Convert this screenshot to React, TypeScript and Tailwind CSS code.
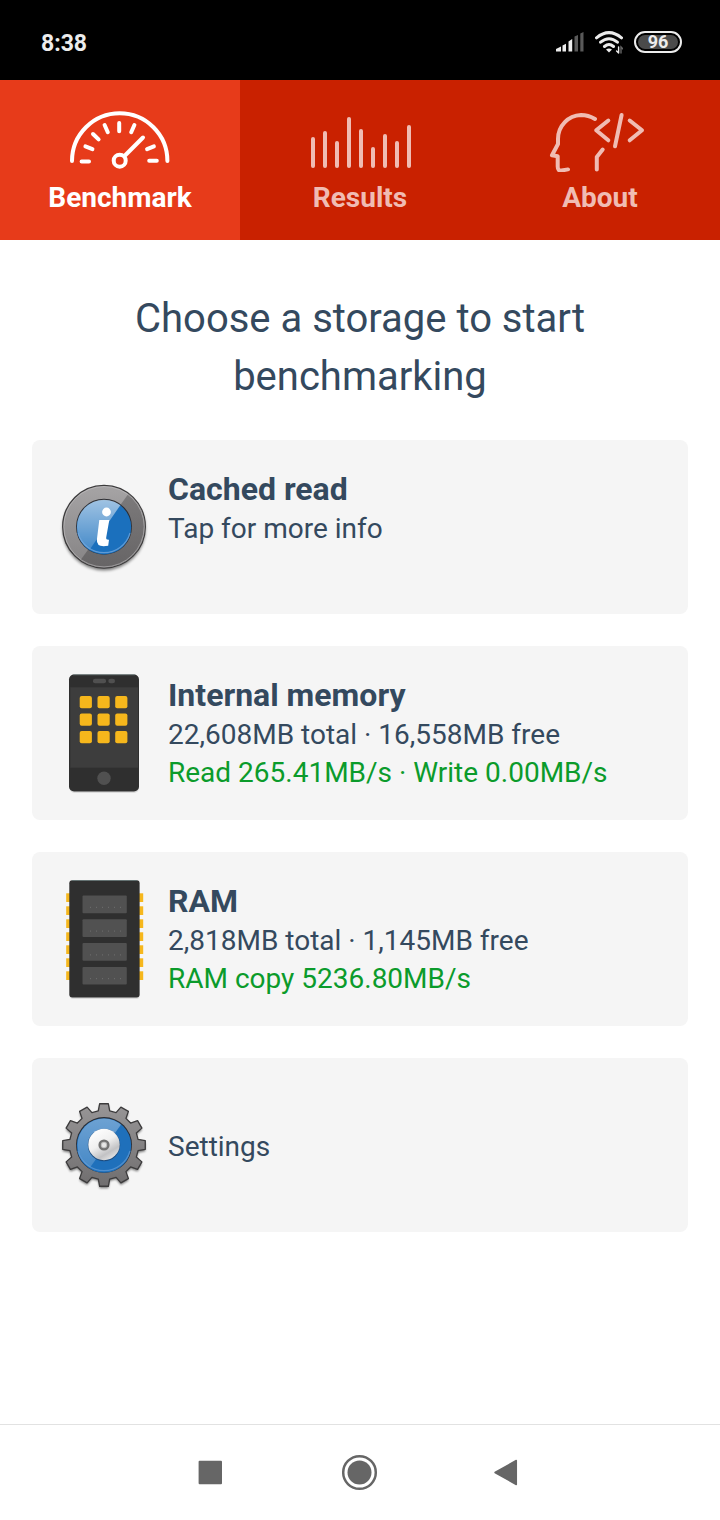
import type { ReactNode } from "react";

const LEVELS = [29, 23, 33, 9, 21, 39, 26, 33, 17];

function GaugeIcon() {
  return (
    <svg className="h-16 w-28" viewBox="0 0 112 64" fill="none" stroke="currentColor" strokeWidth="4" strokeLinecap="round" aria-hidden="true">
      <path d="M8 53a47.7 47.7 0 0 1 95.4 0" />
      <circle cx="55.7" cy="52.7" r="6" />
      <path d="M60.5 48L79 29.5" />
      <path d="M17.600 53.6h7.400M21.400 38.400l7 2.800M29 26l5.600 5.400M40.600 17l3.200 7.200M55.2 15v8.200M70.400 17l-3.200 7.200M89.900 38.400l-6.800 2.800M85.2 52.7h7.600" />
    </svg>
  );
}

function LevelsIcon() {
  return (
    <svg className="h-16 w-28" viewBox="0 0 112 64" fill="none" stroke="currentColor" strokeWidth="4" strokeLinecap="round" aria-hidden="true">
      {LEVELS.map((top, i) => (
        <path key={i} d={`M${9 + i * 12} ${top + 2}V58`} />
      ))}
    </svg>
  );
}

function HeadCodeIcon() {
  return (
    <svg className="h-16 w-28" viewBox="0 0 112 64" fill="none" stroke="currentColor" strokeWidth="4" strokeLinecap="round" strokeLinejoin="round" aria-hidden="true">
      <path d="M51 11C46 8 42 7 37 7C24 7.500 14 18 14 31V36L8 47.300L13.700 48.300V58.500C13.700 61.500 15 63 17.500 62.500L24 61.400" />
      <path d="M58.700 41.500L52.800 49V61.500M64.300 12.500L52.200 22.300L64.300 32.300M77.600 7L71 38.300M85.700 12.500L98 22.300L85.700 32.300" />
    </svg>
  );
}

function InfoIcon() {
  return (
    <svg className="h-full w-full" viewBox="0 0 96 120" aria-hidden="true">
      <defs>
        <linearGradient id="infoRim" x1="0" y1="0" x2="0" y2="1">
          <stop offset="0" stopColor="#a6a4a5" />
          <stop offset="1" stopColor="#858384" />
        </linearGradient>
        <linearGradient id="infoShade" x1="0" y1="0" x2="0" y2="1">
          <stop offset="0" stopColor="#7c7a7b" />
          <stop offset="1" stopColor="#646263" />
        </linearGradient>
        <linearGradient id="infoGloss" x1="0" y1="0" x2="0" y2="1">
          <stop offset="0" stopColor="#fff" stopOpacity="0.6" />
          <stop offset="1" stopColor="#fff" stopOpacity="0.15" />
        </linearGradient>
        <clipPath id="infoDisc"><circle cx="48" cy="59.700" r="41" /></clipPath>
        <clipPath id="infoFace"><circle cx="48" cy="59.700" r="27" /></clipPath>
        <filter id="infoShadow" x="-20%" y="-20%" width="140%" height="140%"><feGaussianBlur stdDeviation="1.500" /></filter>
      </defs>
      <circle cx="48" cy="62" r="41.500" fill="#000" opacity="0.5" filter="url(#infoShadow)" />
      <circle cx="48" cy="59.700" r="41.300" fill="url(#infoRim)" stroke="#3c3b3c" strokeWidth="1.300" />
      <path clipPath="url(#infoDisc)" d="M73 26L21 98L50 110L95 95V30Z" fill="url(#infoShade)" />
      <circle cx="48" cy="59.700" r="40.200" fill="none" stroke="#c8c6c7" strokeWidth="0.800" opacity="0.7" />
      <circle cx="48" cy="59.700" r="28" fill="#2e2f34" />
      <circle cx="48" cy="60.200" r="27.200" fill="#1b70bd" />
      <path clipPath="url(#infoFace)" d="M18 30H70L30 88L15 80Z" fill="url(#infoGloss)" />
      <path d="M22 66a27 27 0 0 0 52 0" fill="none" stroke="#7aace0" strokeWidth="1.200" opacity="0.7" />
      <circle cx="50.500" cy="45" r="4.400" fill="#fff" />
      <path d="M43.300 53H53.300L50.200 70.500Q49.800 73 53 72.700L52.200 78.700Q40.200 81 40.900 72.500Z" fill="#fff" />
    </svg>
  );
}

function PhoneIcon() {
  return (
    <svg className="h-full w-full" viewBox="0 0 96 120" aria-hidden="true">
      <rect x="13.500" y="4" width="69.500" height="116" rx="5" fill="#000" opacity="0.1" />
      <rect x="13" y="1.500" width="70" height="117" rx="5" fill="#2f2f2f" />
      <rect x="14.300" y="14.300" width="67.700" height="80.400" fill="#3d3d3d" />
      <path d="M17 1.800H79" stroke="#667777" strokeWidth="0.700" />
      <rect x="37" y="5.700" width="13" height="4.600" rx="2" fill="#505050" />
      <rect x="52.300" y="5.700" width="6.700" height="4.600" rx="2.300" fill="#505050" />
      {[23, 40.5, 58].map((y) =>
        [23.7, 41.5, 59.2].map((x) => (
          <rect key={`${x}-${y}`} x={x} y={y} width="12.200" height="12.200" rx="2" fill="#f6b71c" />
        )),
      )}
      <circle cx="48" cy="105.300" r="6.700" fill="#505050" />
    </svg>
  );
}

function RamIcon() {
  return (
    <svg className="h-full w-full" viewBox="0 0 96 120" aria-hidden="true">
      <rect x="14" y="4" width="69.500" height="116" rx="3" fill="#000" opacity="0.1" />
      {[0, 1, 2, 3, 4, 5, 6].map((n) => (
        <g key={n} fill="#f6b71c">
          <rect x="10.200" y={14.3 + n * 13} width="5" height="8.700" />
          <rect x="82" y={14.3 + n * 13} width="5.200" height="8.700" />
        </g>
      ))}
      <rect x="13.300" y="1.200" width="70.300" height="117.400" rx="3" fill="#2f2f2f" />
      <path d="M16 1.500H81" stroke="#667777" strokeWidth="0.800" />
      {[0, 1, 2, 3].map((n) => (
        <g key={n}>
          <rect x="26.500" y={16.5 + n * 23.8} width="44.300" height="17.700" rx="1" fill="#515151" />
          <path d={`M34 ${28.3 + n * 23.8}H66`} stroke="#707070" strokeWidth="1" strokeDasharray="1 5" />
        </g>
      ))}
    </svg>
  );
}

function gearOutline(cx: number, cy: number) {
  const points: string[] = [];
  const corners = [[-9.5, 34.5], [-6, 41.5], [6, 41.5], [9.5, 34.5]];
  for (let tooth = 0; tooth < 12; tooth++) {
    for (const [offset, radius] of corners) {
      const angle = ((tooth * 30 + offset) * Math.PI) / 180;
      points.push(`${(cx + radius * Math.sin(angle)).toFixed(2)},${(cy - radius * Math.cos(angle)).toFixed(2)}`);
    }
  }
  return points.join(" ");
}

function GearIcon() {
  return (
    <svg className="h-full w-full" viewBox="0 0 96 120" aria-hidden="true">
      <defs>
        <linearGradient id="gearBody" x1="0" y1="0" x2="0" y2="1">
          <stop offset="0" stopColor="#989697" />
          <stop offset="1" stopColor="#706e6f" />
        </linearGradient>
        <linearGradient id="gearHub" x1="0.200" y1="0" x2="0.800" y2="1">
          <stop offset="0" stopColor="#fff" />
          <stop offset="0.450" stopColor="#f0f0f0" />
          <stop offset="0.750" stopColor="#c2c2c4" />
          <stop offset="1" stopColor="#eee" />
        </linearGradient>
        <linearGradient id="gearGloss" x1="0" y1="0" x2="0" y2="1">
          <stop offset="0" stopColor="#fff" stopOpacity="0.36" />
          <stop offset="1" stopColor="#fff" stopOpacity="0.16" />
        </linearGradient>
        <clipPath id="gearFace"><circle cx="48" cy="60" r="26.500" /></clipPath>
        <filter id="gearShadow" x="-20%" y="-20%" width="140%" height="140%"><feGaussianBlur stdDeviation="1.300" /></filter>
      </defs>
      <polygon points={gearOutline(48, 62)} fill="#000" opacity="0.5" filter="url(#gearShadow)" />
      <polygon points={gearOutline(48, 60)} fill="url(#gearBody)" stroke="#3c3b3c" strokeWidth="1.300" strokeLinejoin="round" />
      <circle cx="48" cy="60" r="28" fill="#2b2d33" />
      <circle cx="48" cy="60.500" r="27.200" fill="#1f70bb" />
      <path clipPath="url(#gearFace)" d="M18 30H72L30 88L15 80Z" fill="url(#gearGloss)" />
      <path d="M22 66a27 27 0 0 0 52 0" fill="none" stroke="#6fa4da" strokeWidth="1.200" opacity="0.6" />
      <circle cx="48" cy="60" r="16.200" fill="#1d4d80" />
      <circle cx="48" cy="59.500" r="15.700" fill="url(#gearHub)" />
      <circle cx="48" cy="60" r="4.400" fill="#bdbdbd" stroke="#737373" strokeWidth="2.400" />
      <circle cx="48" cy="60" r="2.200" fill="#e6e6e6" />
    </svg>
  );
}

function StatusBar() {
  return (
    <header className="flex h-20 items-center justify-between bg-black pr-[38px] pl-[41px] text-[#ececec]">
      <span className="pt-2 text-[23px] leading-7 font-bold">8:38</span>
      <div className="flex items-center gap-[11px] pt-1">
        <svg className="h-6 w-7" viewBox="0 0 28 24" aria-hidden="true">
          <path d="M0 21.500V19l5-2.500v5ZM6.500 15.500L10 13.700V21.500H6.500ZM12.500 11.500L16.200 9V21.500H12.500Z" fill="#ececec" />
          <path d="M18.500 6.500L22 5V21.500H18.500ZM24.300 3.500L27.500 2V21.500H24.300Z" fill="#595959" />
        </svg>
        <svg className="h-6 w-7" viewBox="0 0 28 24" fill="none" stroke="#ececec" strokeWidth="3" strokeLinecap="round" aria-hidden="true">
          <path d="M1.500 7.800Q14 -2.500 26.500 7.800M5.600 12.200Q14 5.200 22.400 12.200M9.500 16.500Q14 12.600 18.500 16.500" />
          <path d="M11 19.600Q14 17.200 17 19.600L14 22.500Z" fill="#ececec" stroke="none" />
          <path d="M23.600 17V23M23.600 23l-2-2" strokeWidth="1.400" />
          <path d="M26 23v-6l2 2" stroke="#666" strokeWidth="1.400" />
        </svg>
        <div className="flex h-[22px] w-12 items-center justify-center rounded-full border-2 border-[#ececec] p-0.5">
          <span className="flex h-full w-full items-center justify-center rounded-full bg-[#4a4a4a] text-[18px] leading-none font-bold">96</span>
        </div>
      </div>
    </header>
  );
}

function Tab({ label, icon, active = false }: { label: string; icon: ReactNode; active?: boolean }) {
  return (
    <button
      type="button"
      aria-current={active ? "page" : undefined}
      className={
        "flex h-40 flex-col items-center gap-2.5 pt-7 " +
        (active ? "bg-[#e73b1a] text-white" : "bg-[#c92100] text-[#f0bcb3]")
      }
    >
      {icon}
      <span className="text-[28px] leading-8 font-bold">{label}</span>
    </button>
  );
}

type CardProps = { icon: ReactNode; title?: string; detail: string; speed?: string };

function Card({ icon, title, detail, speed }: CardProps) {
  return (
    <button type="button" className="flex min-h-[174px] items-center gap-4 rounded-lg bg-[#f5f5f5] px-6 text-left">
      <span className="h-[120px] w-24 shrink-0">{icon}</span>
      <span className={"flex flex-col text-[28px] leading-[38px] " + (title ? "min-h-[118px]" : "pt-1")}>
        {title && <strong className="text-[32px] leading-[42px] font-bold">{title}</strong>}
        <span>{detail}</span>
        {speed && <span className="text-[#0b9b2b]">{speed}</span>}
      </span>
    </button>
  );
}

function NavigationBar() {
  return (
    <footer className="flex h-24 items-center justify-center gap-[100px] border-t border-[#e2e2e2] text-[#666]">
      <button type="button" aria-label="Recent apps" className="size-12">
        <svg viewBox="0 0 48 48" fill="currentColor" aria-hidden="true"><rect x="10.600" y="11.800" width="23.400" height="23.400" rx="1" /></svg>
      </button>
      <button type="button" aria-label="Home" className="size-12">
        <svg viewBox="0 0 48 48" aria-hidden="true">
          <circle cx="23.500" cy="23.500" r="16.300" fill="none" stroke="currentColor" strokeWidth="2.500" />
          <circle cx="23.500" cy="23.500" r="12" fill="currentColor" />
        </svg>
      </button>
      <button type="button" aria-label="Back" className="size-12">
        <svg viewBox="0 0 48 48" fill="currentColor" stroke="currentColor" strokeWidth="1.500" strokeLinejoin="round" aria-hidden="true"><path d="M11 23.500L32.300 11.500V35.500Z" /></svg>
      </button>
    </footer>
  );
}

export default function App() {
  return (
    <div className="flex min-h-screen flex-col bg-white font-['Roboto',sans-serif] text-[#34495e]">
      <StatusBar />
      <nav className="grid grid-cols-3">
        <Tab label="Benchmark" icon={<GaugeIcon />} active />
        <Tab label="Results" icon={<LevelsIcon />} />
        <Tab label="About" icon={<HeadCodeIcon />} />
      </nav>
      <main className="flex grow flex-col px-8 pt-[50px] pb-12">
        <h1 className="mx-auto max-w-[560px] pb-[34px] text-center text-[40px] leading-[58px] font-normal">
          Choose a storage to start benchmarking
        </h1>
        <div className="flex flex-col gap-8">
          <Card icon={<InfoIcon />} title="Cached read" detail="Tap for more info" />
          <Card icon={<PhoneIcon />} title="Internal memory" detail="22,608MB total · 16,558MB free" speed="Read 265.41MB/s · Write 0.00MB/s" />
          <Card icon={<RamIcon />} title="RAM" detail="2,818MB total · 1,145MB free" speed="RAM copy 5236.80MB/s" />
          <Card icon={<GearIcon />} detail="Settings" />
        </div>
      </main>
      <NavigationBar />
    </div>
  );
}
